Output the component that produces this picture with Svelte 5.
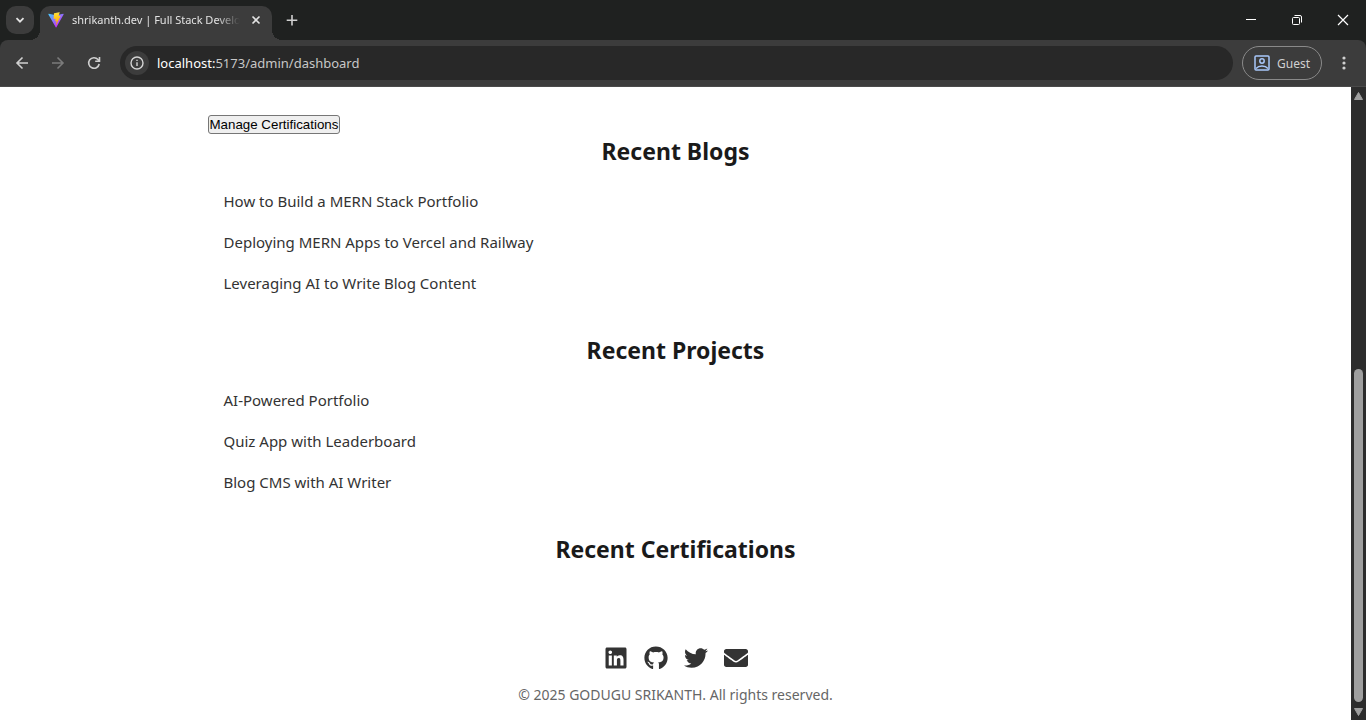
<script>
  const sections = [
    {
      title: 'Recent Blogs',
      items: [
        'How to Build a MERN Stack Portfolio',
        'Deploying MERN Apps to Vercel and Railway',
        'Leveraging AI to Write Blog Content'
      ]
    },
    {
      title: 'Recent Projects',
      items: ['AI-Powered Portfolio', 'Quiz App with Leaderboard', 'Blog CMS with AI Writer']
    },
    { title: 'Recent Certifications', items: [] }
  ];

  const socials = [
    {
      name: 'LinkedIn',
      box: '0 0 448 512',
      d: 'M416 32H31.9C14.3 32 0 46.5 0 64.3v383.4C0 465.5 14.3 480 31.9 480H416c17.6 0 32-14.5 32-32.3V64.3c0-17.8-14.4-32.3-32-32.3zM135.4 416H69V202.2h66.5V416zm-33.2-243c-21.3 0-38.5-17.3-38.5-38.5S80.9 96 102.2 96c21.2 0 38.5 17.3 38.5 38.5 0 21.3-17.2 38.5-38.5 38.5zm282.1 243h-66.4V312c0-24.8-.5-56.7-34.5-56.7-34.6 0-39.9 27-39.9 54.9V416h-66.4V202.2h63.7v29.2h.9c8.9-16.8 30.6-34.5 62.9-34.5 67.2 0 79.7 44.3 79.7 101.9V416z'
    },
    {
      name: 'GitHub',
      box: '0 0 496 512',
      d: 'M165.9 397.4c0 2-2.3 3.6-5.2 3.6-3.3.3-5.6-1.3-5.6-3.6 0-2 2.3-3.6 5.2-3.6 3-.3 5.6 1.3 5.6 3.6zm-31.1-4.5c-.7 2 1.3 4.3 4.3 4.9 2.6 1 5.6 0 6.2-2s-1.3-4.3-4.3-5.2c-2.6-.7-5.5.3-6.2 2.3zm44.2-1.7c-2.9.7-4.9 2.6-4.6 4.9.3 2 2.9 3.3 5.9 2.6 2.9-.7 4.9-2.6 4.6-4.6-.3-1.9-3-3.2-5.9-2.9zM244.8 8C106.1 8 0 113.3 0 252c0 110.9 69.8 205.8 169.5 239.2 12.8 2.3 17.3-5.6 17.3-12.1 0-6.2-.3-40.4-.3-61.4 0 0-70 15-84.7-29.8 0 0-11.4-29.1-27.8-36.6 0 0-22.9-15.7 1.6-15.4 0 0 24.9 2 38.6 25.8 21.9 38.6 58.6 27.5 72.9 20.9 2.3-16 8.8-27.1 16-33.7-55.9-6.2-112.3-14.3-112.3-110.5 0-27.5 7.6-41.3 23.6-58.9-2.6-6.5-11.1-33.3 2.6-67.9 20.9-6.5 69 27 69 27 20-5.6 41.5-8.5 62.8-8.5s42.8 2.9 62.8 8.5c0 0 48.1-33.6 69-27 13.7 34.7 5.2 61.4 2.6 67.9 16 17.7 25.8 31.5 25.8 58.9 0 96.5-58.9 104.2-114.8 110.5 9.2 7.9 17 22.9 17 46.4 0 33.7-.3 75.4-.3 83.6 0 6.5 4.6 14.4 17.3 12.1C428.2 457.8 496 362.9 496 252 496 113.3 383.5 8 244.8 8z'
    },
    {
      name: 'Twitter',
      box: '0 0 512 512',
      d: 'M459.37 151.716c.325 4.548.325 9.097.325 13.645 0 138.72-105.583 298.558-298.558 298.558-59.452 0-114.68-17.219-161.137-47.106 8.447.974 16.568 1.299 25.34 1.299 49.055 0 94.213-16.568 130.274-44.832-46.132-.975-84.792-31.188-98.112-72.772 6.498.974 12.995 1.624 19.818 1.624 9.421 0 18.843-1.3 27.614-3.573-48.081-9.747-84.143-51.98-84.143-102.985v-1.299c13.969 7.797 30.214 12.67 47.431 13.319-28.264-18.843-46.781-51.005-46.781-87.391 0-19.492 5.197-37.36 14.294-52.954 51.655 63.675 129.3 105.258 216.365 109.807-1.624-7.797-2.599-15.918-2.599-24.04 0-57.828 46.782-104.934 104.934-104.934 30.213 0 57.502 12.67 76.67 33.137 23.715-4.548 46.456-13.32 66.599-25.34-7.798 24.366-24.366 44.833-46.132 57.827 21.117-2.273 41.584-8.122 60.426-16.243-14.292 20.791-32.161 39.308-52.628 54.253z'
    },
    {
      name: 'Email',
      box: '0 0 512 512',
      d: 'M502.3 190.8c3.9-3.1 9.7-.2 9.7 4.7V400c0 26.5-21.5 48-48 48H48c-26.5 0-48-21.5-48-48V195.6c0-5 5.7-7.8 9.7-4.7 22.4 17.4 52.1 39.5 154.1 113.6 21.1 15.4 56.7 47.8 92.2 47.6 35.7.3 72-32.8 92.3-47.6 102-74.1 131.6-96.3 154-113.7zM256 320c23.2.4 56.6-29.2 73.4-41.4 132.7-96.3 142.8-104.7 173.4-128.7 5.8-4.5 9.2-11.5 9.2-18.9v-19c0-26.5-21.5-48-48-48H48c-26.5 0-48 21.5-48 48v19c0 7.4 3.4 14.3 9.2 18.9 30.6 23.9 40.7 32.4 173.4 128.7 16.8 12.2 50.2 41.8 73.4 41.4z'
    }
  ];
</script>

<div class="browser">
  <header class="tabstrip">
    <button class="tab-search" aria-label="Search tabs">
      <svg width="12" height="12" viewBox="0 0 12 12"><path d="M2.5 4.2 6 7.7l3.5-3.5" fill="none" stroke="#e3e3e3" stroke-width="1.8" /></svg>
    </button>
    <div class="tab">
      <svg width="16" height="16" viewBox="0 0 410 404" aria-hidden="true">
        <defs>
          <linearGradient id="shield" x1="6" y1="33" x2="235" y2="344" gradientUnits="userSpaceOnUse">
            <stop stop-color="#41d1ff" /><stop offset="1" stop-color="#bd34fe" />
          </linearGradient>
          <linearGradient id="bolt" x1="195" y1="9" x2="236" y2="293" gradientUnits="userSpaceOnUse">
            <stop stop-color="#ffea83" /><stop offset=".08" stop-color="#ffdd35" /><stop offset="1" stop-color="#ffa800" />
          </linearGradient>
        </defs>
        <path fill="url(#shield)" d="m399.6 59.5-184 329c-3.8 6.8-13.5 6.8-17.4.1L10.6 59.6C6.4 52.2 12.8 43.200 21.200 44.700l184.200 32.900a10 10 0 0 0 3.500 0l180.300-32.900c8.300-1.500 14.700 7.400 10.400 14.800Z" />
        <path fill="url(#bolt)" d="M293 1.600 156.800 28.200a5 5 0 0 0-4 4.600l-8.400 141.500c-.2 3.300 2.900 5.900 6.100 5.200l37.900-8.800c3.600-.8 6.800 2.300 6 5.900l-11.200 55.100c-.8 3.700 2.700 6.900 6.300 5.800l23.500-7.100c3.600-1.100 7.100 2.100 6.300 5.800l-17.900 86.700c-1.100 5.400 6.100 8.400 9.100 3.800l2-3.100 111-221.500c1.900-3.700-1.300-7.900-5.400-7.100l-39 7.500c-3.700.7-6.800-2.700-5.800-6.300l25.500-88.300c1-3.600-2.200-7.100-5.800-6.300Z" />
      </svg>
      <span class="tab-title">shrikanth.dev | Full Stack Developer</span>
      <button class="icon-button" aria-label="Close tab">
        <svg width="16" height="16" viewBox="0 0 16 16"><path d="m4.500 4.500 7 7m0-7-7 7" stroke="#e3e3e3" stroke-width="1.600" /></svg>
      </button>
    </div>
    <button class="icon-button new-tab" aria-label="New tab">
      <svg width="16" height="16" viewBox="0 0 16 16"><path d="M8 3v10.500M2.700 8.200h10.600" stroke="#d0d0d0" stroke-width="1.600" /></svg>
    </button>
    <div class="window-controls">
      <button aria-label="Minimize"><svg width="12" height="12" viewBox="0 0 12 12"><path d="M1 5.500h10" stroke="#fff" /></svg></button>
      <button aria-label="Restore"><svg width="12" height="12" viewBox="0 0 12 12" fill="none" stroke="#fff"><rect x="1.500" y="3.500" width="7" height="7" rx="1" /><path d="M3.500 1.500H9A1.500 1.500 0 0 1 10.500 3v5.500" /></svg></button>
      <button aria-label="Close"><svg width="12" height="12" viewBox="0 0 12 12"><path d="m1 1 10 10m0-10L1 11" stroke="#fff" stroke-width="1.200" /></svg></button>
    </div>
  </header>

  <nav class="toolbar" aria-label="Browser">
    <button class="nav-button" aria-label="Back">
      <svg width="16" height="16" viewBox="0 0 16 16" fill="none" stroke="#d0d0d0" stroke-width="1.600"><path d="M14 8H3m5.500-5.500L3 8l5.500 5.500" /></svg>
    </button>
    <button class="nav-button" aria-label="Forward" disabled>
      <svg width="16" height="16" viewBox="0 0 16 16" fill="none" stroke="#7b7b7b" stroke-width="1.600"><path d="M2 8h11M7.500 2.500 13 8l-5.500 5.500" /></svg>
    </button>
    <button class="nav-button" aria-label="Reload">
      <svg width="16" height="16" viewBox="0 0 16 16" fill="none" stroke="#d0d0d0" stroke-width="1.600"><path d="M13.200 9A5.300 5.300 0 1 1 12 4.500l1.200 1.300M13.500 2v4.300H9.200" /></svg>
    </button>
    <div class="address">
      <button class="site-info" aria-label="View site information">
        <svg width="16" height="16" viewBox="0 0 16 16" fill="none" stroke="#d4d4d4" stroke-width="1.400"><circle cx="8" cy="8" r="6" /><path d="M8 7.200v3.800M8 4.700v1.400" /></svg>
      </button>
      <span class="url"><b>localhost:</b>5173/admin/dashboard</span>
    </div>
    <button class="profile">
      <svg width="16" height="16" viewBox="0 0 16 16" fill="none" stroke="#a8c7fa" stroke-width="1.500"><rect x="1" y="1" width="14" height="14" rx="1" /><circle cx="8" cy="6" r="2.200" /><path d="M2 13.500c3-3.300 9-3.300 12 0" /></svg>
      Guest
    </button>
    <button class="menu" aria-label="Menu">
      <svg width="16" height="16" viewBox="0 0 16 16" fill="#d0d0d0"><circle cx="8" cy="3" r="1.600" /><circle cx="8" cy="8" r="1.600" /><circle cx="8" cy="13" r="1.600" /></svg>
    </button>
  </nav>

  <div class="viewport">
    <div class="page">
      <main>
        <button class="manage">Manage Certifications</button>
        {#each sections as section}
          <section>
            <h2>{section.title}</h2>
            <ul>
              {#each section.items as item}
                <li>{item}</li>
              {/each}
            </ul>
          </section>
        {/each}
      </main>
      <footer>
        <div class="socials">
          {#each socials as social}
            <a href="#{social.name.toLowerCase()}" aria-label={social.name}>
              <svg width="24" height="24" viewBox={social.box} fill="currentColor"><path d={social.d} /></svg>
            </a>
          {/each}
        </div>
        <p>© 2025 GODUGU SRIKANTH. All rights reserved.</p>
      </footer>
    </div>
    <div class="scrollbar" aria-hidden="true">
      <svg width="9" height="8" viewBox="0 0 9 8"><path d="M4.500.5 8.500 7.500h-8z" fill="#9f9f9f" stroke="#9f9f9f" stroke-linejoin="round" /></svg>
      <div class="track"><div class="thumb"></div></div>
      <svg width="9" height="8" viewBox="0 0 9 8"><path d="M4.500 7.500.5.500h8z" fill="#9f9f9f" stroke="#9f9f9f" stroke-linejoin="round" /></svg>
    </div>
  </div>
</div>

<style>
  :global(body) {
    margin: 0;
    background: #fff;
  }

  .browser {
    min-height: 100vh;
    display: flex;
    flex-direction: column;
    background: #1f2120;
    font-family: 'Segoe UI', 'Noto Sans', sans-serif;
  }

  svg {
    display: block;
    flex: none;
  }

  .tabstrip button,
  .toolbar button {
    display: flex;
    align-items: center;
    justify-content: center;
    padding: 0;
    border: 0;
    background: none;
    font: inherit;
  }

  .tabstrip {
    display: flex;
    height: 40px;
    padding-left: 6px;
  }

  .tabstrip .tab-search {
    width: 28px;
    height: 28px;
    margin: 6px 6px 0 0;
    border-radius: 10px;
    background: #3c3c3c;
  }

  .tab {
    position: relative;
    display: flex;
    align-items: center;
    gap: 8px;
    width: 232px;
    height: 34px;
    margin-top: 6px;
    padding: 0 8px 6px;
    box-sizing: border-box;
    border-radius: 10px 10px 0 0;
    background: #3c3c3c;
  }

  .tab::before,
  .tab::after {
    content: '';
    position: absolute;
    bottom: 0;
    width: 10px;
    height: 10px;
  }

  .tab::before {
    right: 100%;
    background: radial-gradient(circle at 0 0, transparent 10px, #3c3c3c 10px);
  }

  .tab::after {
    left: 100%;
    background: radial-gradient(circle at 100% 0, transparent 10px, #3c3c3c 10px);
  }

  .tab-title {
    flex: 1;
    overflow: hidden;
    white-space: nowrap;
    font-size: 11px;
    line-height: 16px;
    color: #e3e3e3;
    mask-image: linear-gradient(to right, #000 86%, transparent);
  }

  .tabstrip .icon-button {
    width: 16px;
  }

  .tabstrip .new-tab {
    width: 40px;
  }

  .window-controls {
    display: flex;
    margin-left: auto;
  }

  .window-controls button {
    width: 46px;
  }

  .toolbar {
    display: flex;
    align-items: center;
    height: 47px;
    padding: 0 8px 0 4px;
    box-sizing: border-box;
    border-bottom: 1px solid #4a4a4a;
    border-radius: 8px 8px 0 0;
    background: #3c3c3c;
  }

  .toolbar .nav-button {
    width: 36px;
    height: 34px;
  }

  .address {
    flex: 1;
    display: flex;
    align-items: center;
    gap: 8px;
    height: 34px;
    margin: 0 9px 0 8px;
    padding-left: 5px;
    border-radius: 17px;
    background: #282828;
  }

  .toolbar .site-info {
    width: 24px;
    height: 24px;
    border-radius: 12px;
    background: #3c3c3c;
  }

  .url {
    font-size: 13px;
    line-height: 20px;
    color: #c7c7c7;
  }

  .url b {
    font-weight: 400;
    color: #fff;
  }

  .toolbar .profile {
    gap: 7px;
    height: 34px;
    padding: 0 11px;
    border: 1px solid #8a8a8a;
    border-radius: 17px;
    font-size: 12px;
    color: #d0d0d0;
  }

  .toolbar .menu {
    width: 28px;
    height: 34px;
    margin-left: 8px;
  }

  .viewport {
    flex: 1;
    display: flex;
  }

  .page {
    flex: 1;
    background: #fff;
    color: #333;
  }

  main {
    max-width: 1000px;
    margin: 0 auto;
    padding: 28px 32px 0;
    box-sizing: border-box;
  }

  .manage {
    display: block;
    padding: 1px;
    border: 1px solid #767676;
    border-radius: 3px;
    background: #efefef;
    color: #000;
    font-family: Arial, 'Liberation Sans', sans-serif;
    line-height: 15px;
  }

  section {
    margin-bottom: 29px;
  }

  h2 {
    margin: 0 0 13px;
    font-size: 23px;
    line-height: 34px;
    font-weight: 700;
    text-align: center;
    color: #1a1a1a;
  }

  ul {
    margin: 0;
    padding: 0;
    list-style: none;
  }

  li {
    padding: 8px 16px;
    font-size: 15px;
    line-height: 25px;
  }

  footer {
    padding: 51px 16px 12px;
    text-align: center;
  }

  .socials {
    display: flex;
    justify-content: center;
    gap: 16px;
  }

  .socials a {
    color: #333;
  }

  footer p {
    margin: 14px 0 0;
    font-size: 14px;
    line-height: 22px;
    color: #666;
  }

  .scrollbar {
    display: flex;
    flex-direction: column;
    align-items: center;
    width: 15px;
    padding: 5px 0 4px;
    box-sizing: border-box;
    background: #2c2c2c;
  }

  .track {
    flex: 1;
    display: flex;
    flex-direction: column;
    justify-content: flex-end;
    padding: 8px 0 6px;
  }

  .thumb {
    width: 9px;
    height: 56%;
    border-radius: 5px;
    background: #9f9f9f;
  }
</style>
